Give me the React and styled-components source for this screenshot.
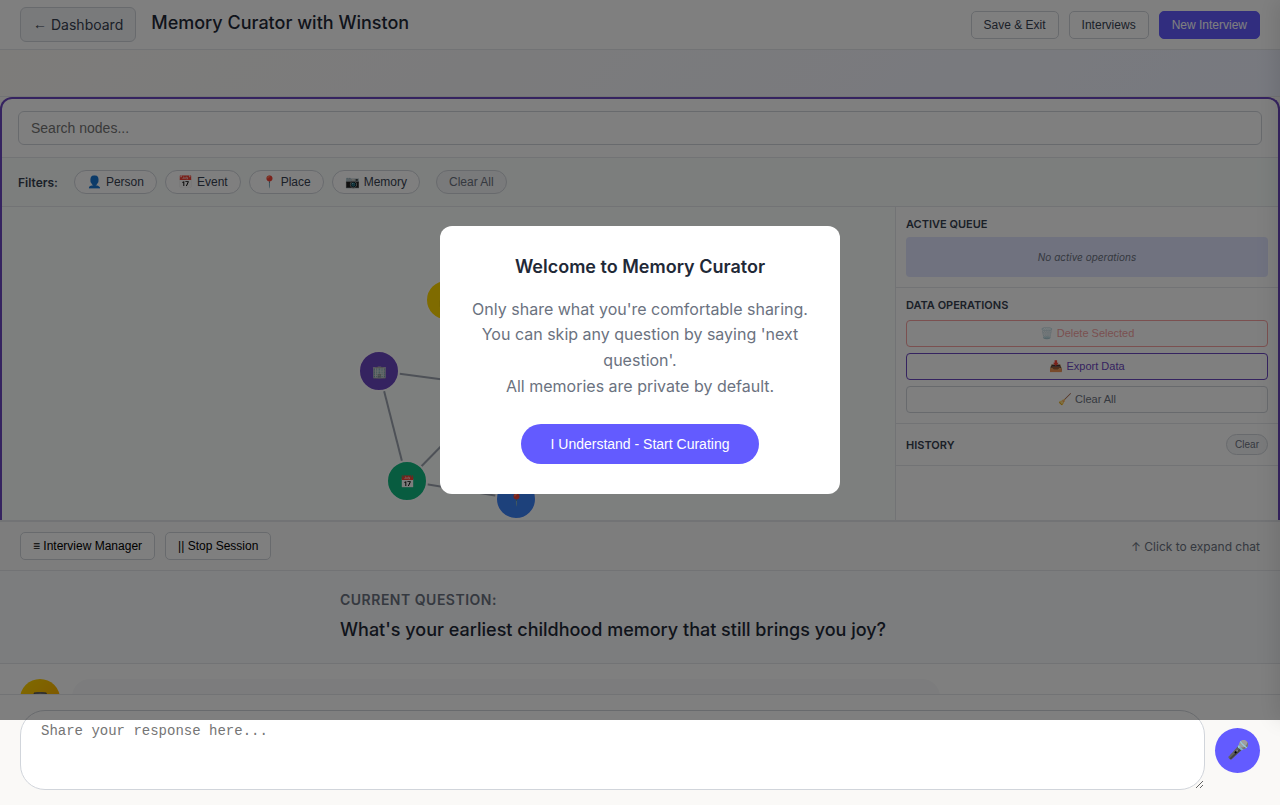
import React from "react";
import styled, { createGlobalStyle } from "styled-components";

const sans = `Inter, "Liberation Sans", sans-serif`;
const control = `"Liberation Sans", Arial, sans-serif`;

const GlobalStyle = createGlobalStyle`
  *, *::before, *::after { box-sizing: border-box; }
  body { margin: 0; font-family: ${sans}; color: #1f2937; background: #faf9f7; text-rendering: optimizeSpeed; }
  h1, h2, h3, p { margin: 0; }
  button { font-family: ${control}; cursor: pointer; }
`;

const Page = styled.div`
  position: relative;
  display: flex;
  flex-direction: column;
  min-height: 100vh;
  overflow: hidden;
`;

const Header = styled.header`
  display: flex;
  justify-content: space-between;
  align-items: center;
  height: 50px;
  padding: 0 20px;
  background: #fff;
  border-bottom: 1px solid #e5e7eb;
`;

const Group = styled.div`
  display: flex;
  align-items: center;
  gap: ${(p) => p.$gap || 10}px;
`;

const BackLink = styled.a`
  display: flex;
  gap: 4px;
  padding: 8px 12px;
  border: 1px solid #d1d5db;
  border-radius: 6px;
  background: #f3f4f6;
  color: #374151;
  font-size: 14px;
  line-height: 17px;
  text-decoration: none;
`;

const BackArrow = styled.span`
  font-family: ${control};
`;

const Title = styled.h1`
  padding-bottom: 4px;
  font-size: 18px;
  line-height: 22px;
  font-weight: 500;
`;

const Button = styled.button`
  height: 28px;
  padding: 0 12px;
  border: 1px solid ${(p) => (p.$primary ? "#635bff" : "#d1d5db")};
  border-radius: 5px;
  background: ${(p) => (p.$primary ? "#635bff" : "#fff")};
  color: ${(p) => (p.$primary ? "#fff" : p.$dark ? "#000" : "#374151")};
  font-size: 12px;
`;

const Banner = styled.div`
  height: 47px;
  background: linear-gradient(135deg, #fbf9f5 0%, #f0f3ff 100%);
  border-bottom: 1px solid #e5e7eb;
`;

const MapPanel = styled.main`
  flex: 1 0 423px;
  display: flex;
  flex-direction: column;
  overflow: hidden;
  border: 2px solid #6b46c1;
  border-bottom: 0;
  border-radius: 12px 12px 0 0;
  background: #fff;
`;

const SearchBar = styled.div`
  padding: 12px 16px;
  border-bottom: 1px solid #e5e7eb;
`;

const SearchInput = styled.input`
  display: block;
  width: 100%;
  height: 34px;
  padding: 0 12px;
  border: 1px solid #d1d5db;
  border-radius: 6px;
  background: #fff;
  font-family: ${control};
  font-size: 14px;
`;

const FilterBar = styled.div`
  display: flex;
  align-items: center;
  gap: 16px;
  padding: 12px 16px;
  background: #f8fdfb;
  border-bottom: 1px solid #e5e7eb;
`;

const FilterLabel = styled.span`
  color: #374151;
  font-size: 12px;
  font-weight: 600;
`;

const Chip = styled.button`
  display: flex;
  align-items: center;
  gap: 4px;
  height: 24px;
  padding: 0 12px;
  border: 1px solid #d1d5db;
  border-radius: 12px;
  background: ${(p) => (p.$muted ? "#f3f4f6" : "#fff")};
  color: ${(p) => (p.$muted ? "#6b7280" : "#374151")};
  font-size: 12px;
`;

const Workspace = styled.div`
  flex: 1;
  display: flex;
  min-height: 0;
`;

const Canvas = styled.svg`
  flex: 1;
  min-width: 0;
  height: 313px;
  background: #fafffc;
`;

const CanvasArea = styled.div`
  flex: 1;
  display: flex;
  min-width: 0;
  background: #fafffc;
`;

const Sidebar = styled.aside`
  flex: 0 0 383px;
  border-left: 1px solid #e5e7eb;
  background: #fefefe;
`;

const Section = styled.section`
  display: flex;
  flex-direction: ${(p) => (p.$row ? "row" : "column")};
  justify-content: space-between;
  gap: ${(p) => p.$gap || 6}px;
  padding: 10px;
  border-bottom: 1px solid #e5e7eb;
`;

const SectionTitle = styled.h2`
  align-self: ${(p) => (p.$center ? "center" : "auto")};
  color: #374151;
  font-size: 11px;
  line-height: 14px;
  font-weight: 600;
  text-transform: uppercase;
`;

const QueueEmpty = styled.p`
  padding: 14px;
  border-radius: 4px;
  background: #e0e4ff;
  color: #6b7280;
  font-size: 10px;
  line-height: 12px;
  font-style: italic;
  text-align: center;
`;

const Stack = styled.div`
  display: flex;
  flex-direction: column;
  gap: 6px;
`;

const tones = {
  danger: ["#ef4444", "#ef4444"],
  accent: ["#6b46c1", "#6b46c1"],
  plain: ["#d1d5db", "#6b7280"],
};

const Operation = styled.button`
  height: 27px;
  border: 1px solid ${(p) => tones[p.$tone][0]};
  border-radius: 4px;
  background: #fff;
  color: ${(p) => tones[p.$tone][1]};
  font-size: 11px;
  &:disabled { opacity: 0.5; }
`;

const SmallPill = styled.button`
  height: 21px;
  padding: 0 8px;
  border: 1px solid #d1d5db;
  border-radius: 12px;
  background: #f3f4f6;
  color: #6b7280;
  font-size: 10px;
`;

const Chat = styled.section`
  flex: none;
  background: #fff;
  border-top: 2px solid #e5e7eb;
`;

const ChatBar = styled.div`
  display: flex;
  justify-content: space-between;
  align-items: center;
  padding: 10px 20px;
  background: #fafafa;
  border-bottom: 1px solid #e5e7eb;
`;

const ExpandHint = styled.span`
  color: #6b7280;
  font-size: 12px;
`;

const Question = styled.div`
  padding: 20px;
  background: #f8fafc;
  border-bottom: 1px solid #e5e7eb;
`;

const QuestionInner = styled.div`
  display: flex;
  flex-direction: column;
  gap: 8px;
  max-width: 600px;
  margin: 0 auto;
`;

const QuestionLabel = styled.h3`
  color: #6b7280;
  font-size: 14px;
  line-height: 17px;
  font-weight: 600;
  letter-spacing: 0.5px;
  text-transform: uppercase;
`;

const QuestionText = styled.p`
  font-size: 18px;
  line-height: 27px;
  font-weight: 500;
`;

const Messages = styled.div`
  display: flex;
  gap: 12px;
  height: 30px;
  padding: 15px 20px 0;
  overflow: hidden;
`;

const Avatar = styled.div`
  flex: none;
  display: flex;
  align-items: center;
  justify-content: center;
  width: 40px;
  height: 40px;
  border-radius: 50%;
  background: linear-gradient(135deg, #ffd700, #ffa500);
  font-size: 18px;
`;

const Bubble = styled.div`
  width: 70%;
  height: 60px;
  border-radius: 18px;
  background: #f8f9fa;
`;

/* The white chat surface ends under the first rows of the form. */
const Composer = styled.form`
  display: flex;
  align-items: center;
  gap: 10px;
  padding: 15px 20px;
  background: linear-gradient(#fff 25px, #faf9f7 25px);
  border-top: 1px solid #e5e7eb;
`;

const ResponseBox = styled.textarea`
  flex: 1;
  display: block;
  height: 80px;
  padding: 12px 20px;
  border: 1px solid #d1d5db;
  border-radius: 25px;
  background: #fff;
  font-family: "Liberation Mono", monospace;
  font-size: 14px;
  resize: vertical;
`;

const MicButton = styled.button`
  width: 45px;
  height: 45px;
  padding: 0;
  border: 0;
  border-radius: 50%;
  background: #635bff;
  font-size: 18px;
`;

/* Closed drawer parked past the right edge; only its shadow reaches the page. */
const Drawer = styled.div`
  position: absolute;
  top: 0;
  bottom: 85px;
  left: 100%;
  width: 400px;
  box-shadow: -4px 0 20px rgba(0, 0, 0, 0.1);
`;

const Overlay = styled.div`
  position: absolute;
  top: 0;
  left: 0;
  right: 0;
  bottom: 85px;
  display: flex;
  align-items: center;
  justify-content: center;
  background: rgba(0, 0, 0, 0.5);
`;

const Modal = styled.div`
  width: 400px;
  padding: 30px;
  border-radius: 12px;
  background: #fff;
  text-align: center;
`;

const ModalTitle = styled.h2`
  margin-bottom: 19px;
  font-size: 18px;
  line-height: 22px;
  font-weight: 600;
`;

const ModalText = styled.p`
  margin-bottom: 25px;
  color: #6b7280;
  font-size: 16px;
  line-height: 1.6;
`;

const ConfirmButton = styled.button`
  height: 40px;
  padding: 0 30px;
  border: 0;
  border-radius: 20px;
  background: #635bff;
  color: #fff;
  font-size: 14px;
`;

const filters = [
  ["👤", "Person"],
  ["📅", "Event"],
  ["📍", "Place"],
  ["📷", "Memory"],
];

const nodes = [
  { id: "org", x: 377, y: 164, fill: "#6b46c1", icon: "🏢" },
  { id: "memory", x: 444, y: 93, fill: "#ffd700", icon: "📷" },
  { id: "event", x: 405, y: 274, fill: "#10b981", icon: "📅" },
  { id: "place", x: 514, y: 292, fill: "#3b82f6", icon: "📍" },
  { id: "person", x: 497, y: 180, fill: "#635bff", icon: "👤" },
];

const links = [
  ["org", "person"],
  ["org", "event"],
  ["event", "person"],
  ["event", "place"],
];

const byId = Object.fromEntries(nodes.map((n) => [n.id, n]));

function MemoryMap() {
  return (
    <Canvas role="img" aria-label="Memory map">
      {links.map(([a, b]) => (
        <line
          key={a + b}
          x1={byId[a].x}
          y1={byId[a].y}
          x2={byId[b].x}
          y2={byId[b].y}
          stroke="#9ca3af"
          strokeWidth="2"
        />
      ))}
      {nodes.map((n) => (
        <g key={n.id}>
          <circle cx={n.x} cy={n.y} r="20" fill={n.fill} stroke="#fff" strokeWidth="2" />
          <text x={n.x} y={n.y} fontSize="12" textAnchor="middle" dominantBaseline="central">
            {n.icon}
          </text>
        </g>
      ))}
    </Canvas>
  );
}

export default function App() {
  return (
    <Page>
      <GlobalStyle />
      <Header>
        <Group $gap={15}>
          <BackLink href="#dashboard">
            <BackArrow>←</BackArrow>
            <span>Dashboard</span>
          </BackLink>
          <Title>Memory Curator with Winston</Title>
        </Group>
        <Group>
          <Button>Save &amp; Exit</Button>
          <Button>Interviews</Button>
          <Button $primary>New Interview</Button>
        </Group>
      </Header>
      <Banner />
      <MapPanel>
        <SearchBar>
          <SearchInput type="search" placeholder="Search nodes..." aria-label="Search nodes" />
        </SearchBar>
        <FilterBar>
          <FilterLabel>Filters:</FilterLabel>
          <Group $gap={8}>
            {filters.map(([icon, label]) => (
              <Chip key={label}>
                <span>{icon}</span>
                <span>{label}</span>
              </Chip>
            ))}
          </Group>
          <Chip $muted>Clear All</Chip>
        </FilterBar>
        <Workspace>
          <CanvasArea>
            <MemoryMap />
          </CanvasArea>
          <Sidebar>
            <Section>
              <SectionTitle>Active Queue</SectionTitle>
              <QueueEmpty>No active operations</QueueEmpty>
            </Section>
            <Section $gap={8}>
              <SectionTitle>Data Operations</SectionTitle>
              <Stack>
                <Operation $tone="danger" disabled>🗑️ Delete Selected</Operation>
                <Operation $tone="accent">📥 Export Data</Operation>
                <Operation $tone="plain">🧹 Clear All</Operation>
              </Stack>
            </Section>
            <Section $row>
              <SectionTitle $center>History</SectionTitle>
              <SmallPill>Clear</SmallPill>
            </Section>
          </Sidebar>
        </Workspace>
      </MapPanel>
      <Chat>
        <ChatBar>
          <Group>
            <Button $dark>≡ Interview Manager</Button>
            <Button $dark>|| Stop Session</Button>
          </Group>
          <ExpandHint>↑ Click to expand chat</ExpandHint>
        </ChatBar>
        <Question>
          <QuestionInner>
            <QuestionLabel>Current Question:</QuestionLabel>
            <QuestionText>What's your earliest childhood memory that still brings you joy?</QuestionText>
          </QuestionInner>
        </Question>
        <Messages>
          <Avatar>🎩</Avatar>
          <Bubble />
        </Messages>
        <Composer>
          <ResponseBox placeholder="Share your response here..." aria-label="Your response" />
          <MicButton type="button" aria-label="Record response">🎤</MicButton>
        </Composer>
      </Chat>
      <Drawer />
      <Overlay>
        <Modal role="dialog" aria-modal="true" aria-labelledby="welcome-title">
          <ModalTitle id="welcome-title">Welcome to Memory Curator</ModalTitle>
          <ModalText>
            Only share what you're comfortable sharing.
            <br />
            You can skip any question by saying 'next question'.
            <br />
            All memories are private by default.
          </ModalText>
          <ConfirmButton>I Understand - Start Curating</ConfirmButton>
        </Modal>
      </Overlay>
    </Page>
  );
}
